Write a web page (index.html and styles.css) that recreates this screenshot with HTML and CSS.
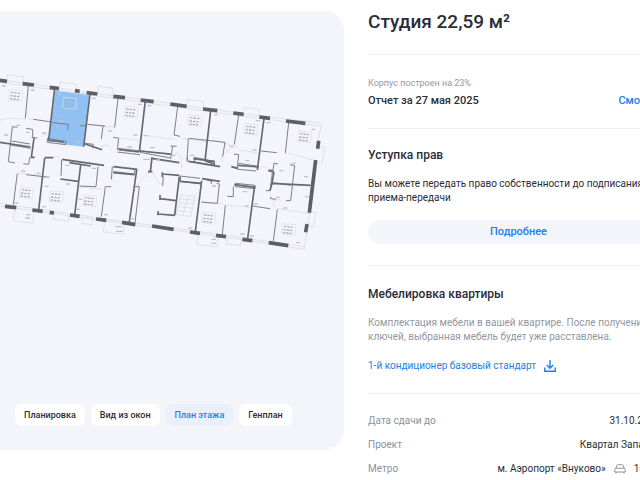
FILE: index.html
```
<!DOCTYPE html>
<html lang="ru">
<head>
    <meta charset="UTF-8">
    <meta name="viewport" content="width=device-width, initial-scale=1">
    <title>Студия 22,59 м²</title>
    <link rel="stylesheet" href="styles.css">
</head>
<body>
    <main class="flat">
        <section class="plan">
            <svg class="plan-drawing" viewBox="0 0 1032 570" role="img" aria-label="План этажа">
                <defs>
                    <g id="label">
                        <path d="M-17 -17L22 -14L19 18L-20 14Z" fill="none" stroke="#dcdee4" stroke-width="2"/>
                        <path d="M-13 -9L15 -6M-15 1L14 4M-16 10L12 13" stroke="#a9adb8" stroke-width="4" stroke-dasharray="7 3"/>
                    </g>
                </defs>
                <path class="selected" d="M166 62L268 72L253 230L200 224L146 210Z"/>
                <!-- facade and balconies -->
                <g class="facade">
                    <path d="M0 29L150 50L265 68L430 89L615 115L785 138L965 160L955 210M930 425L912 538L745 512L590 490L380 462L215 438L0 408"/>
                    <path d="M0 37L430 97L615 123L955 168M915 530L745 506L585 483L380 456L215 432L0 400"/>
                    <path d="M22 27V14L70 20V36M180 52V36L230 43V58M294 66V48L338 55V74M562 102V88L610 95V112M732 124V112L778 118V135M955 230L974 233L966 280L952 278M934 425L948 427L940 470L928 468"/>
                    <path d="M45 418L40 452L98 460L102 422M162 432V448L206 454V438M246 440V460L276 464V444M314 454L310 486L370 492L374 458M596 490L590 524L652 530L654 498M680 502V522L722 527V508"/>
                    <path d="M85 148L100 150M270 165L345 172M355 203L420 212M424 195L520 208M545 205L620 215M640 210L710 230M718 240L780 250M865 250L940 270M55 308L125 318M240 350L310 358M605 398L668 402M680 405L755 412M832 416L928 430M78 150L72 148Q40 140 0 150"/>
                    <path d="M305 235Q315 212 335 240M125 200Q138 178 146 202M520 258Q545 230 545 295M668 275Q655 255 690 238M805 300Q790 280 775 300M160 262Q175 250 186 280M335 325Q350 300 365 305M410 350Q440 305 456 305M456 305Q475 345 488 342M825 412Q808 390 838 388"/>
                    <path d="M543 374L585 379L572 440L528 433ZM565 377L548 436M541 386L584 391M539 398L582 403M537 410L580 415M533 422L576 427"/>
                </g>
                <!-- partitions -->
                <g class="thin">
                    <path d="M85 47L76 145M100 148L155 156M158 158L205 163L203 180M354 85L344 172M533 110L522 195L540 199M716 135L703 224M866 158L856 250M783 243L830 248"/>
                    <path d="M52 310L40 404M78 314L148 322M316 350L304 440M316 350H334M404 350H418L405 458M676 405L667 493M758 408L810 416M832 418L820 513"/>
                    <path d="M52 172L37 170L25 275L45 279M78 175L98 178V204M70 281L86 283L89 262M35 213L90 222M31 225L92 235M95 202L112 204"/>
                    <path d="M142 205L197 214M142 217L197 224V212M142 205V217M240 167H260M262 163L315 168M309 168L304 207M340 202L356 205L352 240M256 220L280 223L278 235"/>
                    <path d="M354 235L515 254M352 246L420 254M512 228L530 229M518 228L512 266M420 247L512 264M568 205L675 217M565 205L561 272M675 217L668 260M562 260V274L582 276M583 262L643 274V286L583 276Z"/>
                    <path d="M702 252L716 254L712 294M696 292H714M716 280L776 289M714 298L768 303M185 270L183 318M294 290L288 350L238 348M337 290L334 328M340 305L404 312M404 298V310"/>
                    <path d="M540 318L600 325M540 334L604 342M606 325L636 335L632 342M490 320L488 348M650 340L658 342L652 400L604 396M700 350V380L682 379M706 340L765 346V356L706 350Z"/>
                    <path d="M805 300H818L810 362H798M818 305L822 280L834 282M870 284L884 287L872 392H858M812 380V386L828 388M820 338L872 346"/>
                </g>
                <!-- bearing walls -->
                <g class="wall">
                    <path d="M164 55L146 210M270 72L251 230M436 92L418 246M632 122L615 272M792 145L772 300M134 264L116 420M242 285L224 435M410 300L388 456M538 320L524 436M605 332L586 485M763 354L743 506"/>
                    <path d="M0 217L92 231M102 204L94 262H104M134 263L160 263M186 268L312 286M208 278L272 288M181 327L234 334M340 290L412 298M340 308L404 314M456 262L451 305M444 305H457"/>
                    <path d="M144 211L192 216M254 221L282 231L306 239M356 239L418 246M420 243L512 252M580 266L645 275M614 272L645 283M538 316L488 312M487 307V322M540 320V334M540 334L604 340M607 326L660 334"/>
                    <path d="M454 265L538 278M566 274L660 290M480 375V390M480 386L528 392M474 424V436M474 432L524 436M694 290L714 296M714 286L776 291M703 344L767 352M805 302L820 305M815 340L932 346M822 305L816 340L810 362"/>
                </g>
                <g class="pier">
                    <path d="M0 31L21 34M68 41L102 45M149 52L177 56M225 62L239 64M260 68L292 72M340 79L375 83M422 90L461 95M511 102L560 109M609 117L652 122M700 129L731 133M778 141L810 145M858 153L916 160"/>
                    <path d="M15 409L49 413M97 420L128 424M149 427L162 429M210 435L239 439M288 447L319 451M366 457L406 464M456 468L521 478M570 486L600 490M648 496L678 500M727 508L757 512M806 518L865 527"/>
                    <path d="M956 212L953 236M947 270L928 428M921 462L917 487"/>
                </g>
                <use href="#label" x="46" y="76"/>
                <use href="#label" x="208" y="99"/>
                <use href="#label" x="392" y="126"/>
                <use href="#label" x="584" y="152"/>
                <use href="#label" x="752" y="178"/>
                <use href="#label" x="913" y="200"/>
                <use href="#label" x="78" y="368"/>
                <use href="#label" x="168" y="380"/>
                <use href="#label" x="268" y="392"/>
                <use href="#label" x="625" y="444"/>
                <use href="#label" x="865" y="478"/>
                <path class="marks" d="M5 48h12M92 60h12M174 72h10M276 85h12M414 103h12M442 107h12M642 134h12M768 152h12M800 158h12M935 178h10M164 135h10M178 153h12M126 189h12M12 195h12M48 166h12M78 187h10M228 216h12M325 183h12M400 195h12M432 197h12M382 231h14M450 233h14M514 256h12M570 256h12M688 230h12M758 240h12M736 272h12M875 280h12M838 302h12M912 320h12M914 380h12M64 303h12M110 310h12M136 322h12M134 349h12M44 399h12M126 410h12M228 418h12M312 434h12M78 434h14M76 444h14M346 470h20M348 484h20M390 446h12M198 342h12M430 268h20M468 270h12M565 474h12M634 508h14M634 520h14M636 348h12M728 365h14M734 408h12M762 402h12M828 382h12M850 414h12M720 492h14M750 498h12M888 518h12M196 286h12M276 295h12M236 388h10"/>
            </svg>
            <nav class="views">
                <button type="button" class="view">Планировка</button>
                <button type="button" class="view">Вид из окон</button>
                <button type="button" class="view active">План этажа</button>
                <button type="button" class="view">Генплан</button>
            </nav>
        </section>
        <section class="details">
            <h1>Студия 22,59 м²</h1>
            <div class="progress">
                <p class="caption">Корпус построен на 23%</p>
                <div class="row">
                    <strong>Отчет за 27 мая 2025</strong>
                    <a href="#" class="report">Смотреть</a>
                </div>
            </div>
            <div class="assignment">
                <h2>Уступка прав</h2>
                <p>Вы можете передать право собственности до подписания<br>приема-передачи</p>
                <button type="button" class="more">Подробнее</button>
            </div>
            <div class="furniture">
                <h2>Мебелировка квартиры</h2>
                <p>Комплектация мебели в вашей квартире. После получения<br>ключей, выбранная мебель будет уже расставлена.</p>
                <a href="#" class="download">1-й кондиционер базовый стандарт
                    <svg width="12" height="12" viewBox="0 0 12 12" fill="none" stroke="currentColor" stroke-width="1.4"><path d="M6 0V8M2.8 5L6 8.2L9.2 5M.8 7.5V11.2H11.2V7.5"/></svg>
                </a>
            </div>
            <dl class="facts">
                <div class="row">
                    <dt>Дата сдачи до</dt>
                    <dd>31.10.2026 г.</dd>
                </div>
                <div class="row">
                    <dt>Проект</dt>
                    <dd>Квартал Западный</dd>
                </div>
                <div class="row">
                    <dt>Метро</dt>
                    <dd class="metro">м. Аэропорт «Внуково»
                        <svg width="12" height="10" viewBox="0 0 12 10" fill="none" stroke="#8b919e"><path d="M2 4L3 1.2Q3.2 .7 4 .7H8Q8.8 .7 9 1.2L10 4M2 4.2H10Q11.2 4.2 11.2 5.4V8H.8V5.4Q.8 4.2 2 4.2ZM2 8V9.5M10 8V9.5"/></svg>
                        16 мин.
                    </dd>
                </div>
            </dl>
        </section>
    </main>
</body>
</html>
```
FILE: styles.css
```
* {
    margin: 0;
    padding: 0;
    box-sizing: border-box;
}
body {
    font-family: Roboto, 'Liberation Sans', sans-serif;
    font-size: 10px;
    line-height: 14px;
    color: #292d38;
    background: #fff;
    overflow-x: hidden;
}
a {
    color: #1d80ea;
    text-decoration: none;
}
button {
    font: inherit;
    border: none;
    cursor: pointer;
}
.flat {
    display: flex;
    align-items: flex-start;
    gap: 24px;
    padding-top: 11px;
    margin-right: -29px;
}
.plan {
    flex: 1;
    min-width: 0;
    padding: 59px 0 24px;
    background: #f4f5fb;
    border-radius: 0 20px 20px 0;
}
.plan-drawing {
    display: block;
    width: 100%;
}
.selected {
    fill: #91c1f3;
}
.facade {
    fill: none;
    stroke: #dfe1e7;
    stroke-width: 3;
}
.thin {
    fill: none;
    stroke: #7d808a;
    stroke-width: 3;
}
.wall {
    fill: none;
    stroke: #666973;
    stroke-width: 5;
}
.pier {
    stroke: #5c5f68;
    stroke-width: 11;
}
.marks {
    stroke: #c0c3cc;
    stroke-width: 4;
}
.views {
    display: flex;
    gap: 6px;
    margin-top: 144px;
    padding-left: 15px;
}
.view {
    height: 22px;
    padding: 0 9px;
    font-size: 9px;
    font-weight: 500;
    color: #292d38;
    background: #fff;
    border-radius: 7px;
    white-space: nowrap;
}
.view.active {
    color: #1d80ea;
    background: #eaf0fb;
}
.details {
    flex: 0 0 301px;
    min-width: 0;
    white-space: nowrap;
}
h1 {
    font-size: 19px;
    line-height: 22px;
    font-weight: 500;
}
h2 {
    font-size: 12px;
    line-height: 16px;
    font-weight: 500;
}
.row {
    display: flex;
    justify-content: space-between;
}
.row strong,
.report {
    font-size: 11px;
    font-weight: 500;
}
.progress {
    margin-top: 21px;
    padding: 20px 0;
    border-top: 1px solid #f0f1f4;
    border-bottom: 1px solid #f0f1f4;
}
.caption {
    font-size: 9px;
    line-height: 16px;
    color: #9297a3;
    margin-bottom: 3px;
}
.assignment {
    padding: 18px 0 21px;
    border-bottom: 1px solid #f0f1f4;
}
.assignment p {
    margin: 14px 0 15px;
}
.more {
    display: block;
    width: 100%;
    height: 24px;
    font-size: 11px;
    font-weight: 500;
    color: #1d80ea;
    background: #f4f5fb;
    border-radius: 12px;
}
.furniture {
    padding: 20px 0;
    border-bottom: 1px solid #eceef1;
}
.furniture p {
    margin: 14px 0 15px;
    color: #9297a3;
}
.download {
    display: flex;
    align-items: center;
    gap: 8px;
}
.facts {
    display: grid;
    gap: 10px;
    padding-top: 20px;
}
.facts dt {
    color: #8b919e;
}
.metro {
    display: flex;
    align-items: center;
    gap: 8px;
}
```
